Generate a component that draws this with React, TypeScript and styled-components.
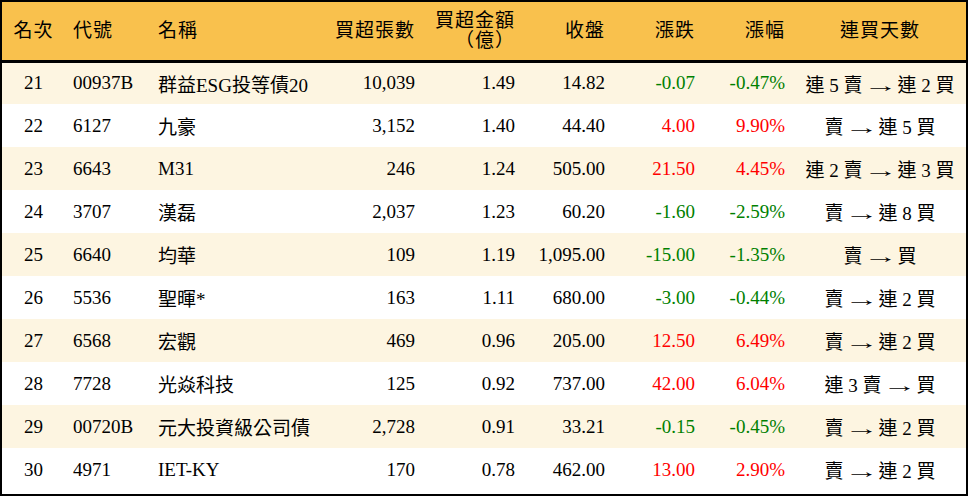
import React from 'react';
import styled, { createGlobalStyle } from 'styled-components';

const GlobalStyle = createGlobalStyle`
  html, body {
    margin: 0;
    padding: 0;
    background: #ffffff;
  }
  body {
    font-family: "Liberation Serif", "Noto Sans CJK TC", serif;
  }
`;

type Align = 'left' | 'right' | 'center';

interface Row {
  rank: number;
  code: string;
  name: string;
  lots: string;
  amount: string;
  close: string;
  change: string;
  pct: string;
  from: string;
  to: string;
}

const rows: Row[] = [
  { rank: 21, code: '00937B', name: '群益ESG投等債20', lots: '10,039', amount: '1.49', close: '14.82', change: '-0.07', pct: '-0.47%', from: '連 5 賣', to: '連 2 買' },
  { rank: 22, code: '6127', name: '九豪', lots: '3,152', amount: '1.40', close: '44.40', change: '4.00', pct: '9.90%', from: '賣', to: '連 5 買' },
  { rank: 23, code: '6643', name: 'M31', lots: '246', amount: '1.24', close: '505.00', change: '21.50', pct: '4.45%', from: '連 2 賣', to: '連 3 買' },
  { rank: 24, code: '3707', name: '漢磊', lots: '2,037', amount: '1.23', close: '60.20', change: '-1.60', pct: '-2.59%', from: '賣', to: '連 8 買' },
  { rank: 25, code: '6640', name: '均華', lots: '109', amount: '1.19', close: '1,095.00', change: '-15.00', pct: '-1.35%', from: '賣', to: '買' },
  { rank: 26, code: '5536', name: '聖暉*', lots: '163', amount: '1.11', close: '680.00', change: '-3.00', pct: '-0.44%', from: '賣', to: '連 2 買' },
  { rank: 27, code: '6568', name: '宏觀', lots: '469', amount: '0.96', close: '205.00', change: '12.50', pct: '6.49%', from: '賣', to: '連 2 買' },
  { rank: 28, code: '7728', name: '光焱科技', lots: '125', amount: '0.92', close: '737.00', change: '42.00', pct: '6.04%', from: '連 3 賣', to: '買' },
  { rank: 29, code: '00720B', name: '元大投資級公司債', lots: '2,728', amount: '0.91', close: '33.21', change: '-0.15', pct: '-0.45%', from: '賣', to: '連 2 買' },
  { rank: 30, code: '4971', name: 'IET-KY', lots: '170', amount: '0.78', close: '462.00', change: '13.00', pct: '2.90%', from: '賣', to: '連 2 買' },
];

const columns: { width: number; align: Align }[] = [
  { width: 62, align: 'center' },
  { width: 85, align: 'left' },
  { width: 170, align: 'left' },
  { width: 104, align: 'right' },
  { width: 100, align: 'right' },
  { width: 90, align: 'right' },
  { width: 90, align: 'right' },
  { width: 90, align: 'right' },
  { width: 173, align: 'center' },
];

const Frame = styled.div`
  width: 968px;
  height: 496px;
  box-sizing: border-box;
  border: 2px solid #000;
  overflow: hidden;
`;

const Table = styled.table`
  width: 100%;
  table-layout: fixed;
  border-collapse: collapse;
  font-size: 19px;
  color: #000;
`;

const HeadRow = styled.tr`
  height: 59px;
  background: #f9c14d;
  border-bottom: 3px solid #000;
`;

const HeadCell = styled.th<{ $align: Align }>`
  padding: 0 8px 0 9px;
  text-align: ${({ $align }) => $align};
  font-weight: normal;
  line-height: 20px;
  letter-spacing: 1px;
  white-space: nowrap;
  vertical-align: middle;
`;

const BodyRow = styled.tr<{ $shaded: boolean }>`
  height: 43px;
  background: ${({ $shaded }) => ($shaded ? '#fdf5e1' : '#ffffff')};
`;

const Cell = styled.td<{ $align: Align; $tone?: 'up' | 'down' }>`
  padding: 0 8px 0 9px;
  text-align: ${({ $align }) => $align};
  color: ${({ $tone }) => ($tone === 'up' ? '#ff0000' : $tone === 'down' ? '#008000' : '#000')};
  white-space: nowrap;
  vertical-align: middle;
`;

const Arrow = styled.span`
  display: inline-block;
  margin: 0 8px;
  font-family: "Liberation Serif", serif;
  font-size: 19px;
  transform: scaleX(1.8);
`;

const headers: React.ReactNode[] = [
  '名次',
  '代號',
  '名稱',
  '買超張數',
  <>買超金額<br />（億）</>,
  '收盤',
  '漲跌',
  '漲幅',
  '連買天數',
];

const App: React.FC = () => {
  return (
    <>
      <GlobalStyle />
      <Frame>
        <Table>
          <colgroup>
            {columns.map((c, i) => (
              <col key={i} style={{ width: c.width }} />
            ))}
          </colgroup>
          <thead>
            <HeadRow>
              {headers.map((h, i) => (
                <HeadCell key={i} $align={columns[i].align}>
                  {h}
                </HeadCell>
              ))}
            </HeadRow>
          </thead>
          <tbody>
            {rows.map((r, i) => {
              const tone = r.change.startsWith('-') ? 'down' : 'up';
              return (
                <BodyRow key={r.rank} $shaded={i % 2 === 0}>
                  <Cell $align="center">{r.rank}</Cell>
                  <Cell $align="left">{r.code}</Cell>
                  <Cell $align="left">{r.name}</Cell>
                  <Cell $align="right">{r.lots}</Cell>
                  <Cell $align="right">{r.amount}</Cell>
                  <Cell $align="right">{r.close}</Cell>
                  <Cell $align="right" $tone={tone}>{r.change}</Cell>
                  <Cell $align="right" $tone={tone}>{r.pct}</Cell>
                  <Cell $align="center">
                    {r.from}
                    <Arrow>→</Arrow>
                    {r.to}
                  </Cell>
                </BodyRow>
              );
            })}
          </tbody>
        </Table>
      </Frame>
    </>
  );
};

export default App;
